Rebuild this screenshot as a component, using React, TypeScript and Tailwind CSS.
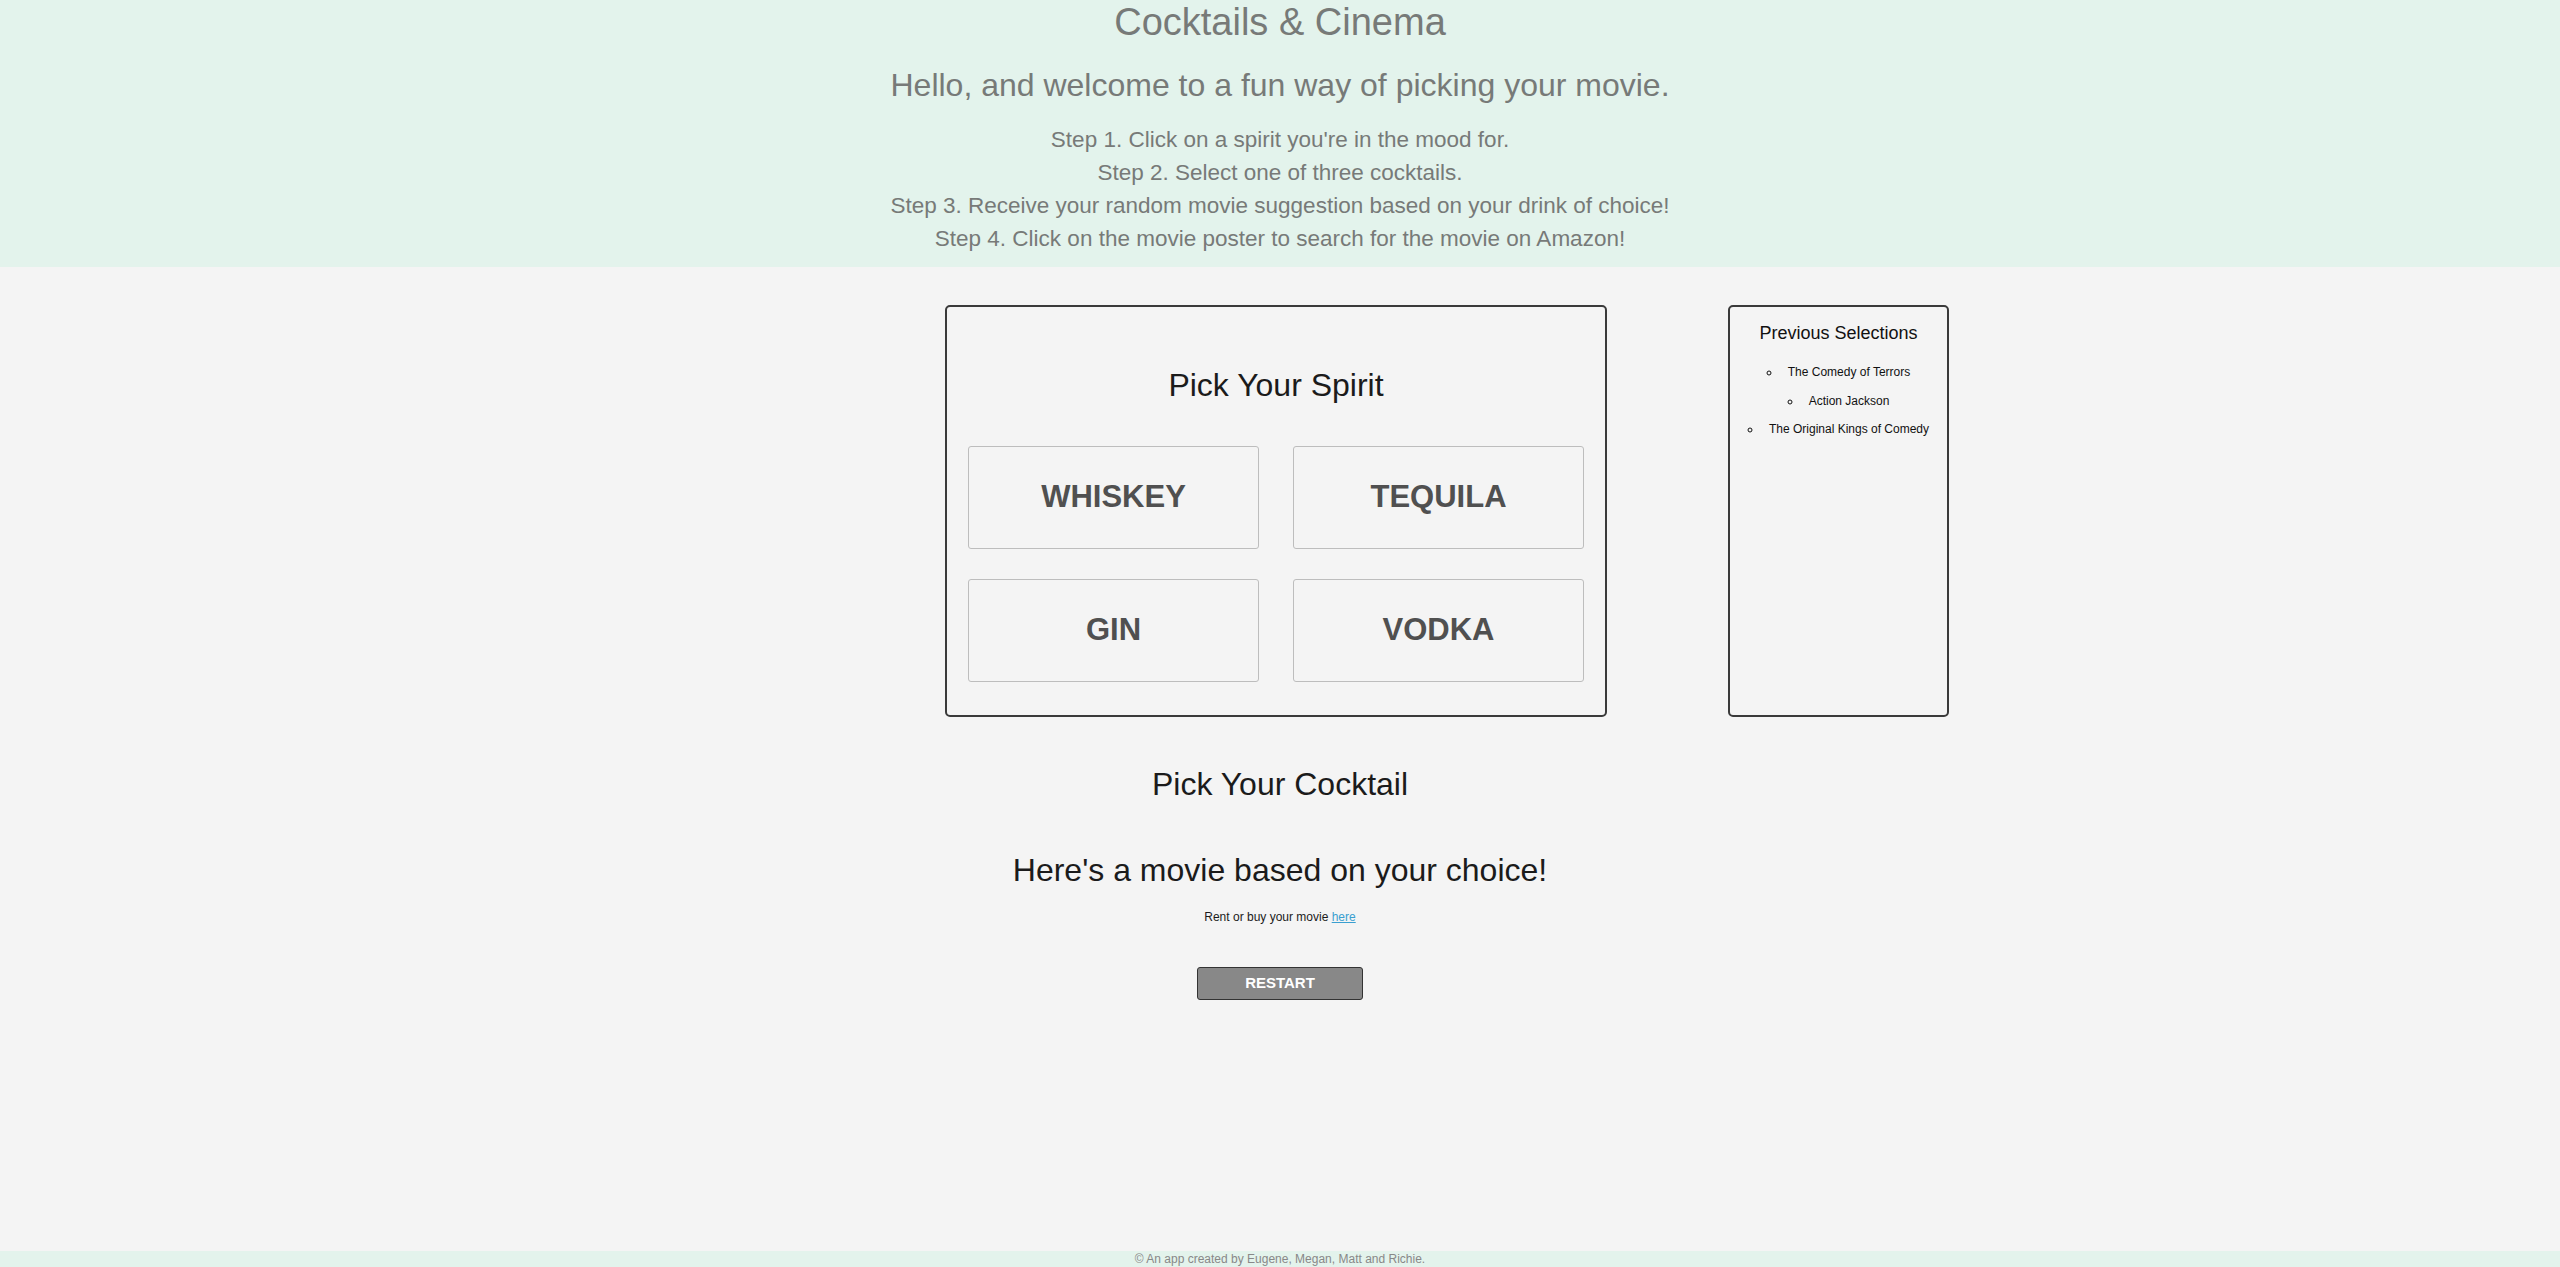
import React from 'react';

const steps = [
  "Step 1. Click on a spirit you're in the mood for.",
  'Step 2. Select one of three cocktails.',
  'Step 3. Receive your random movie suggestion based on your drink of choice!',
  'Step 4. Click on the movie poster to search for the movie on Amazon!',
];

const spirits = ['WHISKEY', 'TEQUILA', 'GIN', 'VODKA'];

const history = ['The Comedy of Terrors', 'Action Jackson', 'The Original Kings of Comedy'];

export default function App() {
  return (
    <div className="min-h-screen flex flex-col bg-[#f4f4f4] font-['Liberation_Sans',Arial,sans-serif]">
      {/* Header */}
      <header className="bg-[#e3f3ec] text-center text-[#777a78] pb-[12px]">
        <h1 className="text-[38px] leading-[44px]">Cocktails &amp; Cinema</h1>
        <h2 className="mt-[21px] text-[32px] leading-[40px]">
          Hello, and welcome to a fun way of picking your movie.
        </h2>
        <div className="mt-[18px] text-[22.5px] leading-[33px]">
          {steps.map((s) => (
            <p key={s}>{s}</p>
          ))}
        </div>
      </header>

      <main className="flex-1">
        <div className="flex items-start pt-[38px] pl-[945px]">
          {/* Spirit picker */}
          <section className="w-[662px] h-[412px] border-2 border-[#3a3a3a] rounded-[5px] px-[21px] pt-[54px]">
            <h2 className="text-center text-[32px] text-[#1b1b1b]">Pick Your Spirit</h2>
            <div className="mt-[37px] grid grid-cols-2 gap-x-[34px] gap-y-[30px]">
              {spirits.map((s) => (
                <button
                  key={s}
                  className="h-[103px] border border-[#bdbdbd] rounded-[3px] bg-[#f4f4f4] text-[31px] font-bold text-[#505050]"
                >
                  {s}
                </button>
              ))}
            </div>
          </section>

          {/* Previous selections */}
          <aside className="ml-[121px] w-[221px] h-[412px] border-2 border-[#3a3a3a] rounded-[5px] pt-[13px] text-center text-[#111]">
            <h3 className="text-[18px]">Previous Selections</h3>
            <ul className="mt-[11px] list-[circle] list-inside text-[12px] leading-[28.5px]">
              {history.map((h) => (
                <li key={h}>
                  <span className="ml-[4px]">{h}</span>
                </li>
              ))}
            </ul>
          </aside>
        </div>

        <div className="text-center text-[#1b1b1b]">
          <h2 className="mt-[43px] text-[32px]">Pick Your Cocktail</h2>
          <h2 className="mt-[38px] text-[32px]">Here's a movie based on your choice!</h2>
          <p className="mt-[14px] text-[12px]">
            Rent or buy your movie{' '}
            <a href="#" className="text-[#3a9fd0] underline">
              here
            </a>
          </p>
          <button className="mt-[41px] w-[166px] h-[33px] bg-[#888] border border-[#333] rounded-[3px] text-white text-[15px] font-bold">
            RESTART
          </button>
        </div>
      </main>

      <footer className="bg-[#e3f3ec] h-[16px] flex items-center justify-center text-[12px] text-[#888]">
        © An app created by Eugene, Megan, Matt and Richie.
      </footer>
    </div>
  );
}
